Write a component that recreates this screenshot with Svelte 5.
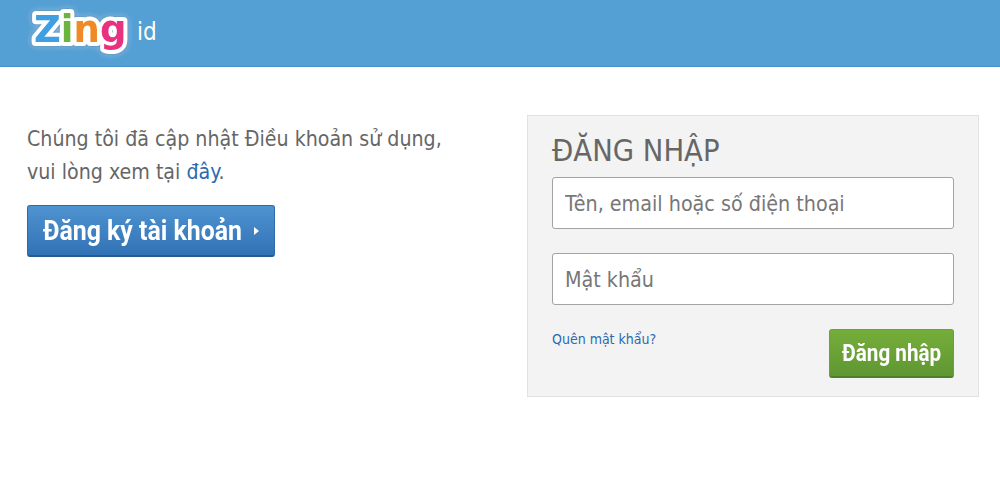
<script lang="ts">
  let username = $state('');
  let password = $state('');
</script>

<header class="topbar">
  <a class="logo" href="#top" aria-label="Zing ID">
    <svg width="106" height="62" viewBox="0 0 106 62">
      <text x="9" y="42"><tspan class="z">Z</tspan><tspan class="i">i</tspan><tspan class="n">n</tspan><tspan class="g">g</tspan></text>
    </svg>
    <span class="suffix">id</span>
  </a>
</header>

<main class="page">
  <section class="intro">
    <p>Chúng tôi đã cập nhật Điều khoản sử dụng,<br />vui lòng xem tại <a href="#terms">đây</a>.</p>
    <a class="btn btn-blue" href="#register">
      <span class="narrow">Đăng ký tài khoản</span>
      <svg width="7" height="10" viewBox="0 0 7 10"><path d="M1 1 6 5 1 9z" fill="#fff" /></svg>
    </a>
  </section>

  <form class="login" onsubmit={(e) => e.preventDefault()}>
    <h2>ĐĂNG NHẬP</h2>
    <input type="text" placeholder="Tên, email hoặc số điện thoại" bind:value={username} />
    <input type="password" placeholder="Mật khẩu" bind:value={password} />
    <div class="actions">
      <a class="forgot" href="#forgot">Quên mật khẩu?</a>
      <button class="btn btn-green" type="submit"><span class="narrow">Đăng nhập</span></button>
    </div>
  </form>
</main>

<style>
  :global(body) {
    margin: 0;
    background: #fff;
    font-family: "DejaVu Sans Condensed", "DejaVu Sans", sans-serif;
    font-stretch: condensed;
    color: #666;
  }
  .topbar {
    height: 66px;
    background: #549fd4;
    border-bottom: 1px solid #4a8fd0;
    padding-left: 25px;
  }
  .logo {
    display: flex;
    align-items: center;
    height: 62px;
    text-decoration: none;
  }
  .logo svg {
    display: block;
    overflow: visible;
    filter: drop-shadow(0 0 1.5px #3f7aa5) drop-shadow(0 0 2.5px #a5cbe6);
  }
  .logo text {
    font-family: "DejaVu Sans", sans-serif;
    font-stretch: normal;
    font-weight: 700;
    font-size: 37px;
    stroke: #fff;
    stroke-width: 8px;
    stroke-linejoin: round;
    paint-order: stroke;
  }
  .z { fill: #3f9fe3; }
  .i { fill: #6cb33f; }
  .n { fill: #f08a24; }
  .g { fill: #e8317f; }
  .suffix {
    color: #fff;
    font-size: 24px;
    line-height: 1;
    margin: 2px 0 0 6px;
  }
  .page {
    display: flex;
    justify-content: space-between;
    padding: 48px 21px 0 27px;
  }
  .intro p {
    margin: 7px 0 17px;
    font-size: 21.2px;
    line-height: 33px;
    color: #666;
  }
  .intro p a {
    color: #2a6ab0;
    text-decoration: none;
  }
  .btn {
    display: flex;
    align-items: center;
    box-sizing: border-box;
    border-radius: 3px;
    color: #fff;
    font-family: Roboto, sans-serif;
    font-stretch: normal;
    font-weight: 700;
    text-decoration: none;
    cursor: pointer;
  }
  .narrow {
    display: inline-block;
    transform: scaleX(0.887);
    white-space: nowrap;
  }
  .btn-blue {
    width: 248px;
    height: 52px;
    background: linear-gradient(#4f93d0, #3172b5);
    border: 1px solid #2f6ca8;
    border-bottom: 2px solid #255a92;
    font-size: 28px;
    padding-left: 15px;
  }
  .btn-blue .narrow {
    transform-origin: left center;
    width: 199px;
  }
  .btn-blue svg {
    margin-left: 11px;
  }
  .login {
    width: 452px;
    height: 282px;
    box-sizing: border-box;
    background: #f3f3f3;
    border: 1px solid #e2e2e2;
    padding: 12px 24px 0;
  }
  h2 {
    margin: 0;
    height: 49px;
    font-size: 30.6px;
    font-weight: 400;
    line-height: 45px;
    color: #666;
  }
  input {
    display: block;
    width: 402px;
    height: 52px;
    box-sizing: border-box;
    margin-bottom: 24px;
    padding: 0 12px;
    background: #fff;
    border: 1px solid #a3a3a3;
    border-radius: 3px;
    font-family: inherit;
    font-stretch: inherit;
    font-size: 21.3px;
    color: #666;
    outline: none;
  }
  input::placeholder {
    color: #777;
    opacity: 1;
  }
  .actions {
    display: flex;
    justify-content: space-between;
    align-items: flex-start;
  }
  .forgot {
    margin-top: 1px;
    font-size: 14px;
    line-height: 18px;
    color: #2a6ab0;
    text-decoration: none;
  }
  .btn-green {
    width: 125px;
    height: 49px;
    justify-content: center;
    background: linear-gradient(#76ae3b, #5f9632);
    border: 1px solid #6aa236;
    border-bottom: 2px solid #4d7f28;
    font-size: 24px;
    padding: 0;
  }
  .btn-green .narrow {
    transform: scaleX(0.86);
  }
</style>
